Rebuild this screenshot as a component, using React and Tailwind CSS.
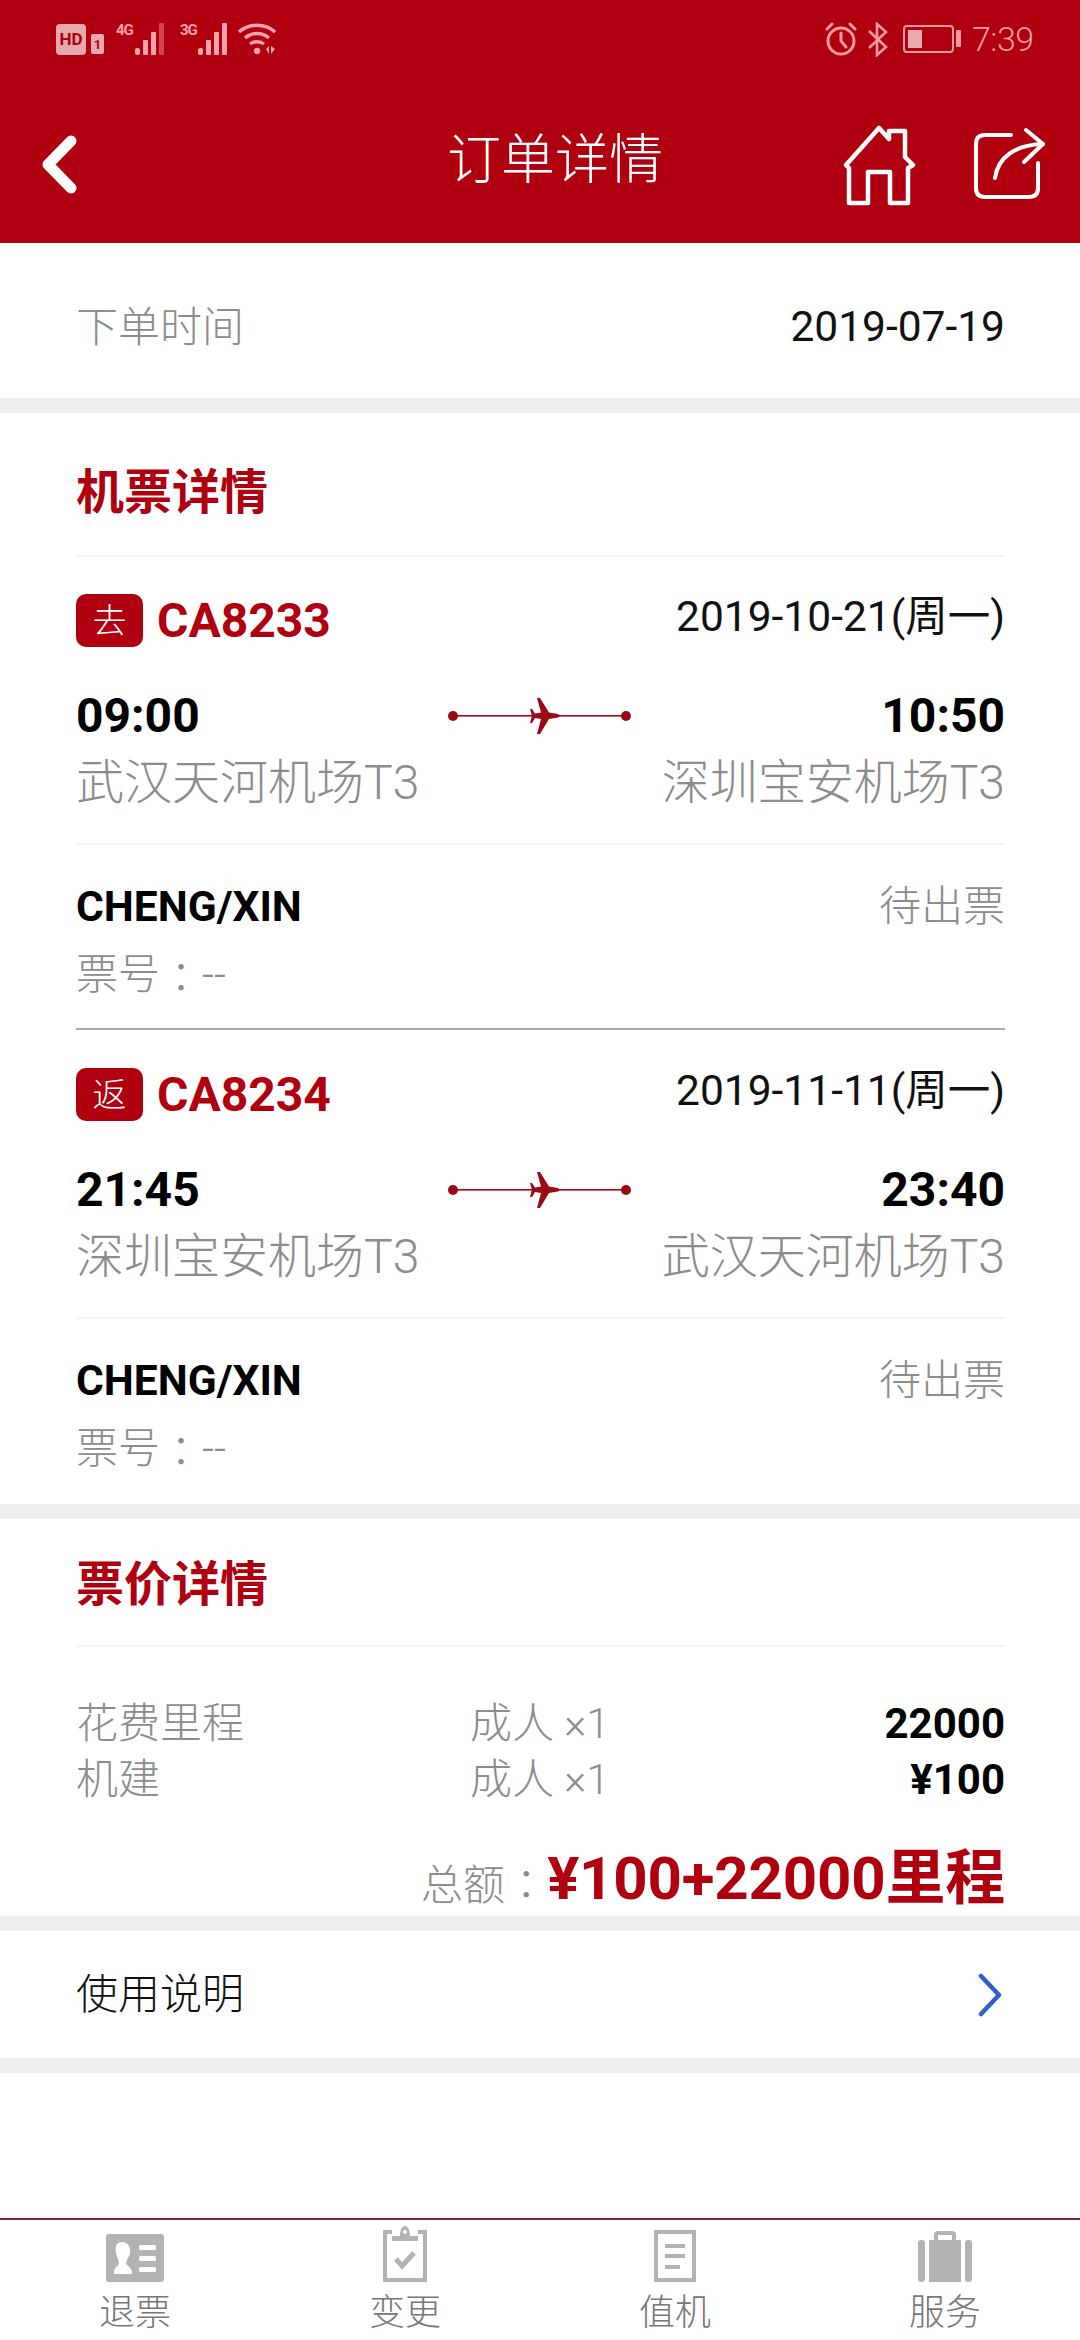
const FONT = "[font-family:Roboto,'Noto_Sans_CJK_SC',sans-serif]";
const COLON = "[font-family:'Noto_Sans_CJK_TC',sans-serif]";

function Bars({ dim }) {
  return (
    <svg width="34" height="32" viewBox="0 0 34 32" fill="#f7a3a9">
      <rect x="0" y="25" width="5" height="7" rx="2" />
      <rect x="8" y="17" width="5" height="15" rx="1" />
      <rect x="16" y="9" width="5" height="23" rx="1" />
      <rect x="24" y="0" width="5" height="32" rx="1" fill={dim ? "#d2454f" : "#f7a3a9"} />
    </svg>
  );
}

function StatusBar() {
  return (
    <div className="h-[80px] flex items-start pt-[22px] pl-[56px] pr-[52px] text-[#f49aa1]">
      <div className="w-[30px] h-[31px] mt-[2px] rounded-[4px] bg-[#e7a9ae] flex items-center justify-center text-[#a8000f] text-[17px] leading-none font-bold">HD</div>
      <div className="w-[13px] h-[20px] mt-[12px] ml-[5px] rounded-[2px] bg-[#e7a9ae] flex items-center justify-center text-[#a8000f] text-[13px] leading-none font-bold">1</div>
      <div className="ml-[12px] w-[18px] text-[15px] leading-[17px] font-bold tracking-[-1px] text-[#f7a3a9]">4G</div>
      <div className="ml-[1px] mt-[1px]"><Bars dim /></div>
      <div className="ml-[11px] w-[18px] text-[15px] leading-[17px] font-bold tracking-[-1px] text-[#f7a3a9]">3G</div>
      <div className="mt-[1px]"><Bars /></div>
      <svg className="ml-[6px] mt-[1px]" width="38" height="32" viewBox="0 0 38 32" fill="none" stroke="#f7a3a9" strokeWidth="3.4">
        <path d="M1 9 C11 0 27 0 37 9" />
        <path d="M7 15 C14 9 24 9 31 15" />
        <path d="M12 21 C16 18 22 18 26 21" />
        <circle cx="19" cy="28" r="3.2" fill="#f7a3a9" stroke="none" />
        <path d="M28 26 L31 23 L31 31 Z M33 23 L33 31 L37 26 Z" fill="#f7a3a9" stroke="none" />
      </svg>
      <svg className="ml-auto" width="32" height="34" viewBox="0 0 32 34" fill="none" stroke="#f49aa1" strokeWidth="3" strokeLinecap="round">
        <circle cx="16" cy="19" r="13" />
        <path d="M16 11 V19 L21 25" />
        <path d="M2 7 L7 2 M30 7 L25 2" />
      </svg>
      <svg className="ml-[10px]" width="22" height="35" viewBox="0 0 22 35" fill="none" stroke="#f49aa1" strokeWidth="2.6">
        <path d="M2 9 L19 25 L10 33 V2 L19 10 L2 26" />
      </svg>
      <div className="ml-[14px] mt-[3px] w-[51px] h-[28px] rounded-[4px] border-2 border-[#f49aa1] p-[3px]">
        <div className="w-[14px] h-full bg-[#e7a9ae]" />
      </div>
      <div className="ml-[2px] mt-[8px] w-[5px] h-[17px] rounded-[1px] bg-[#f49aa1]" />
      <div className="ml-[11px] w-[56px] text-[34px] leading-[34px] font-light tracking-[-0.5px] whitespace-nowrap">7:39</div>
    </div>
  );
}

function NavBar() {
  return (
    <div className="h-[163px] flex items-start">
      <svg className="ml-[42px] mt-[55px]" width="35" height="59" viewBox="0 0 35 59" fill="none" stroke="#fff" strokeWidth="11" strokeLinecap="round" strokeLinejoin="round">
        <path d="M29 6 L6 29.5 L29 53" />
      </svg>
      <div className="ml-[370px] mt-[51px] text-[54px] leading-[60px] text-white font-light">订单详情</div>
      <svg className="ml-auto mt-[44px]" width="74" height="82" viewBox="0 0 74 82" fill="none" stroke="#fff" strokeWidth="4.5" strokeLinejoin="round">
        <path d="M4 41 L37 4 L47 15 V7 H63 V33 L71 41 L66 44 V79 H48 V48 H26 V79 H7 V44 Z" />
      </svg>
      <svg className="ml-[57px] mr-[33px] mt-[47px]" width="74" height="74" viewBox="0 0 74 74" fill="none" stroke="#fff" strokeWidth="4" strokeLinecap="round" strokeLinejoin="round">
        <path d="M38 8 H12 Q3 8 3 17 V61 Q3 70 12 70 H56 Q65 70 65 61 V36" />
        <path d="M22 51 C25 30 42 18 70 17" />
        <path d="M53 3 L70 17 L51 35" />
      </svg>
    </div>
  );
}

function Band() {
  return <div className="h-[15px] bg-[#eeeeee]" />;
}

function Divider() {
  return <div className="h-[2px] bg-[#f5f5f5]" />;
}

function Plane() {
  return (
    <svg width="186" height="38" viewBox="0 0 186 38" fill="#9a0a14">
      <circle cx="5" cy="19" r="5" />
      <circle cx="178" cy="19" r="5" />
      <rect x="5" y="18" width="173" height="1.6" />
      <path d="M89 1 L92 1 L101 15.5 L110 17 Q113 18.8 110 20.5 L101 22 L92 37 L89 37 L93 22 L87 21 L84 26 L82 26 L84 18.8 L82 12 L84 12 L87 16.5 L93 15.5 Z" />
    </svg>
  );
}

function Flight({ tag, no, date, dep, arr, from, to }) {
  return (
    <div>
      <div className="h-[125px] pt-[2px] flex items-center">
        <div className="w-[67px] h-[53px] rounded-[10px] bg-[#b0000f] flex items-center justify-center text-white text-[34px] leading-none font-light">{tag}</div>
        <div className="ml-[14px] text-[48px] leading-none font-bold text-[#b0000f]">{no}</div>
        <div className="ml-auto text-[42.5px] leading-none text-[#111] -mt-[6px]">{date}</div>
      </div>
      <div className="h-[68px] flex items-center justify-between relative">
        <div className="text-[48px] leading-none font-bold text-black">{dep}</div>
        <div className="absolute left-[372px] top-[15px]"><Plane /></div>
        <div className="text-[48px] leading-none font-bold text-black">{arr}</div>
      </div>
      <div className="h-[66px] flex items-center justify-between text-[48px] leading-none text-[#8c8c8c] font-light">
        <div>{from}</div>
        <div>{to}</div>
      </div>
      <div className="h-[27px]" />
      <Divider />
      <div className="mt-[27px] h-[70px] flex items-center justify-between">
        <div className="text-[42.5px] leading-none font-bold text-black">CHENG/XIN</div>
        <div className="text-[42px] leading-none text-[#8c8c8c] font-light">待出票</div>
      </div>
      <div className="h-[65px] flex items-center text-[42px] leading-none text-[#8c8c8c] font-light">
        <span>票号</span><span className={COLON}>：</span><span>--</span>
      </div>
    </div>
  );
}

function Tab({ label, children }) {
  return (
    <div className="flex-1 flex flex-col items-center">
      <div className="h-[56px] flex items-end">{children}</div>
      <div className="mt-[9px] text-[36px] leading-[44px] text-[#777777] font-light">{label}</div>
    </div>
  );
}

export default function App() {
  return (
    <div className={`${FONT} w-[1080px] h-[2340px] bg-white flex flex-col overflow-hidden`}>
      <div className="bg-[#b0000f]">
        <StatusBar />
        <NavBar />
      </div>

      <div className="h-[155px] pl-[76px] pr-[75px] pt-[14px] flex items-center justify-between">
        <div className="text-[42px] leading-none text-[#8c8c8c] font-light">下单时间</div>
        <div className="text-[42.5px] leading-none text-[#111]">2019-07-19</div>
      </div>
      <Band />

      <div className="pl-[76px] pr-[75px]">
        <div className="h-[142px] pt-[17px] flex items-center text-[48px] leading-none font-bold text-[#b0000f]">机票详情</div>
        <Divider />
        <Flight tag="去" no="CA8233" date="2019-10-21(周一)" dep="09:00" arr="10:50" from="武汉天河机场T3" to="深圳宝安机场T3" />
        <div className="mt-[21px] mb-[1px] h-[2px] bg-[#a8a8a8]" />
        <Flight tag="返" no="CA8234" date="2019-11-11(周一)" dep="21:45" arr="23:40" from="深圳宝安机场T3" to="武汉天河机场T3" />
      </div>
      <div className="mt-[23px]"><Band /></div>

      <div className="pl-[76px] pr-[75px]">
        <div className="h-[126px] pt-[6px] flex items-center text-[48px] leading-none font-bold text-[#b0000f]">票价详情</div>
        <Divider />
        <div className="mt-[49px] h-[56px] flex items-center text-[42px] leading-none">
          <div className="w-[394px] text-[#8c8c8c] font-light">花费里程</div>
          <div className="text-[#8c8c8c] font-light">成人 ×1</div>
          <div className="ml-auto font-bold text-black">22000</div>
        </div>
        <div className="h-[56px] flex items-center text-[42px] leading-none">
          <div className="w-[394px] text-[#8c8c8c] font-light">机建</div>
          <div className="text-[#8c8c8c] font-light">成人 ×1</div>
          <div className="ml-auto font-bold text-black">¥100</div>
        </div>
        <div className="h-[108px] pb-[7px] flex items-end justify-end">
          <div className="text-[42px] leading-none text-[#8c8c8c] font-light mb-[2px]">
            <span>总额</span><span className={COLON}>：</span>
          </div>
          <div className="text-[60px] leading-none font-bold text-[#b0000f] tracking-[-0.2px]">¥100+22000里程</div>
        </div>
      </div>
      <Band />

      <div className="h-[127px] pl-[76px] pr-[75px] flex items-center justify-between">
        <div className="text-[42px] leading-none text-[#111] font-light">使用说明</div>
        <svg width="26" height="44" viewBox="0 0 26 44" fill="none" stroke="#2f5fc8" strokeWidth="4.5" strokeLinecap="round" strokeLinejoin="round" className="mr-[2px]">
          <path d="M4 3 L22 22 L4 41" />
        </svg>
      </div>
      <Band />

      <div className="flex-1" />

      <div className="h-[122px] border-t-2 border-[#7a2a36] flex pt-[6px] bg-white">
        <Tab label="退票">
          <svg width="58" height="48" viewBox="0 0 58 48">
            <rect width="58" height="48" rx="3" fill="#b3b3b3" />
            <path d="M16 8 C10 8 9 13 10 19 C11 24 13 26 13 29 C13 32 8 33 8 38 V40 H26 V38 C26 33 20 32 20 29 C20 26 23 24 24 19 C25 13 22 8 16 8 Z" fill="#fff" />
            <rect x="33" y="11" width="17" height="5" rx="1.5" fill="#fff" />
            <rect x="33" y="22" width="17" height="5" rx="1.5" fill="#fff" />
            <rect x="33" y="33" width="17" height="5" rx="1.5" fill="#fff" />
          </svg>
        </Tab>
        <Tab label="变更">
          <svg width="44" height="56" viewBox="0 0 44 56" fill="none">
            <path d="M9 6 H2 V54 H42 V6 H35" stroke="#b3b3b3" strokeWidth="4" />
            <path d="M9 15 V10 H17 C17 4 19 0 22 0 C25 0 27 4 27 10 H35 V15 Z" fill="#b3b3b3" />
            <circle cx="22" cy="6" r="2" fill="#fff" />
            <path d="M13 33 L19 40 L31 27" stroke="#b3b3b3" strokeWidth="5" />
          </svg>
        </Tab>
        <Tab label="值机">
          <svg width="42" height="52" viewBox="0 0 42 52" fill="none" stroke="#b3b3b3">
            <rect x="2" y="2" width="38" height="48" strokeWidth="4" />
            <path d="M11 16 H31 M11 26 H31 M11 37 H26" strokeWidth="4" />
          </svg>
        </Tab>
        <Tab label="服务">
          <svg width="54" height="52" viewBox="0 0 54 52" fill="#b3b3b3">
            <rect x="0" y="10" width="7" height="42" rx="3" />
            <rect x="47" y="10" width="7" height="42" rx="3" />
            <path d="M11 10 H16 V5 Q16 1 20 1 H34 Q38 1 38 5 V10 H43 V52 H11 Z M20 10 H34 V5 H20 Z" fillRule="evenodd" />
          </svg>
        </Tab>
      </div>
    </div>
  );
}
